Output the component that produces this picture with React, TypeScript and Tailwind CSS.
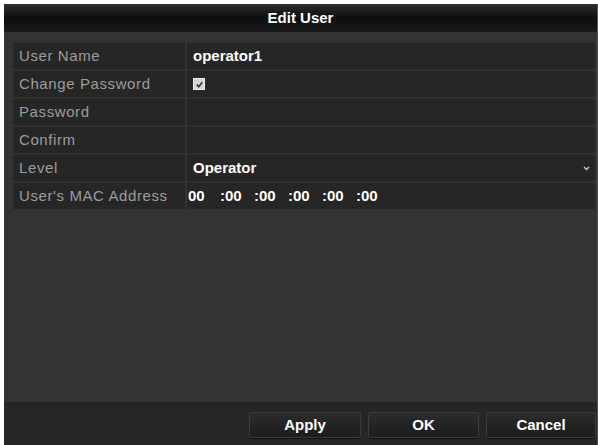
import { useState } from 'react';

interface Field { label: string; kind: 'text' | 'check' | 'empty' | 'select' | 'mac'; value?: string }

const fields: Field[] = [
  { label: 'User Name', kind: 'text', value: 'operator1' },
  { label: 'Change Password', kind: 'check' },
  { label: 'Password', kind: 'empty' },
  { label: 'Confirm', kind: 'empty' },
  { label: 'Level', kind: 'select', value: 'Operator' },
  { label: "User's MAC Address", kind: 'mac' },
];

const mac = ['00', ':00', ':00', ':00', ':00', ':00'];

function Checkbox({ checked }: { checked: boolean }) {
  return (
    <div className="flex h-[12px] w-[12px] items-center justify-center bg-[#d4d4d4] border border-[#eee]">
      {checked && (
        <svg width="9" height="9" viewBox="0 0 10 10">
          <path d="M2 5.2 L4.2 7.4 L8 2.6" fill="none" stroke="#333" strokeWidth="1.8" />
        </svg>
      )}
    </div>
  );
}

function Row({ f, checked }: { f: Field; checked: boolean }) {
  return (
    <div className="flex h-[26px] gap-[2px]">
      <div className="flex w-[172px] items-center bg-[#262626] pl-[6px] text-[15px] tracking-[0.6px] text-[#9c9c9c]">{f.label}</div>
      <div className="flex flex-1 items-center bg-[#262626] pl-[6px] pr-[5px] text-[15px] font-bold text-white">
        {f.kind === 'text' && <span>{f.value}</span>}
        {f.kind === 'check' && <Checkbox checked={checked} />}
        {f.kind === 'select' && (
          <>
            <span className="flex-1">{f.value}</span>
            <svg width="7" height="5" viewBox="0 0 7 5">
              <path d="M1 1 L3.5 3.5 L6 1" fill="none" stroke="#ccc" strokeWidth="1.3" />
            </svg>
          </>
        )}
        {f.kind === 'mac' && (
          <div className="-ml-[5px] flex">
            {mac.map((m, i) => (
              <span key={i} className={i === 0 ? 'w-[32px]' : 'w-[34px]'}>{m}</span>
            ))}
          </div>
        )}
      </div>
    </div>
  );
}

export default function App() {
  const [checked] = useState(true);
  const btn = 'h-[26px] rounded-[2px] border border-[#3c3c3c] bg-gradient-to-b from-[#2c2c2c] to-[#1c1c1c] text-[15px] font-bold text-white shadow-[0_1px_0_#111]';

  return (
    <div className="h-[445px] w-[598px] bg-white pl-1 pt-1" style={{ fontFamily: '"Liberation Sans", Arial, sans-serif' }}>
      <div className="flex h-full flex-col border-r border-[#555] bg-[#333]">
        <div className="flex h-[28px] items-center justify-center bg-gradient-to-b from-[#2e2e2e] via-[#0e0e0e] to-[#1a1a1a] text-[15px] font-semibold text-white">
          Edit User
        </div>
        <div className="flex-1 pl-[9px] pr-[2px] pt-[11px]">
          <div className="flex flex-col gap-[2px]">
            {fields.map(f => <Row key={f.label} f={f} checked={checked} />)}
          </div>
        </div>
        <div className="flex h-[43px] items-start justify-end gap-[7px] bg-[#262626] pr-[1px] pt-[10px]">
          <button className={`${btn} w-[112px]`}>Apply</button>
          <button className={`${btn} w-[111px]`}>OK</button>
          <button className={`${btn} w-[110px]`}>Cancel</button>
        </div>
      </div>
    </div>
  );
}
